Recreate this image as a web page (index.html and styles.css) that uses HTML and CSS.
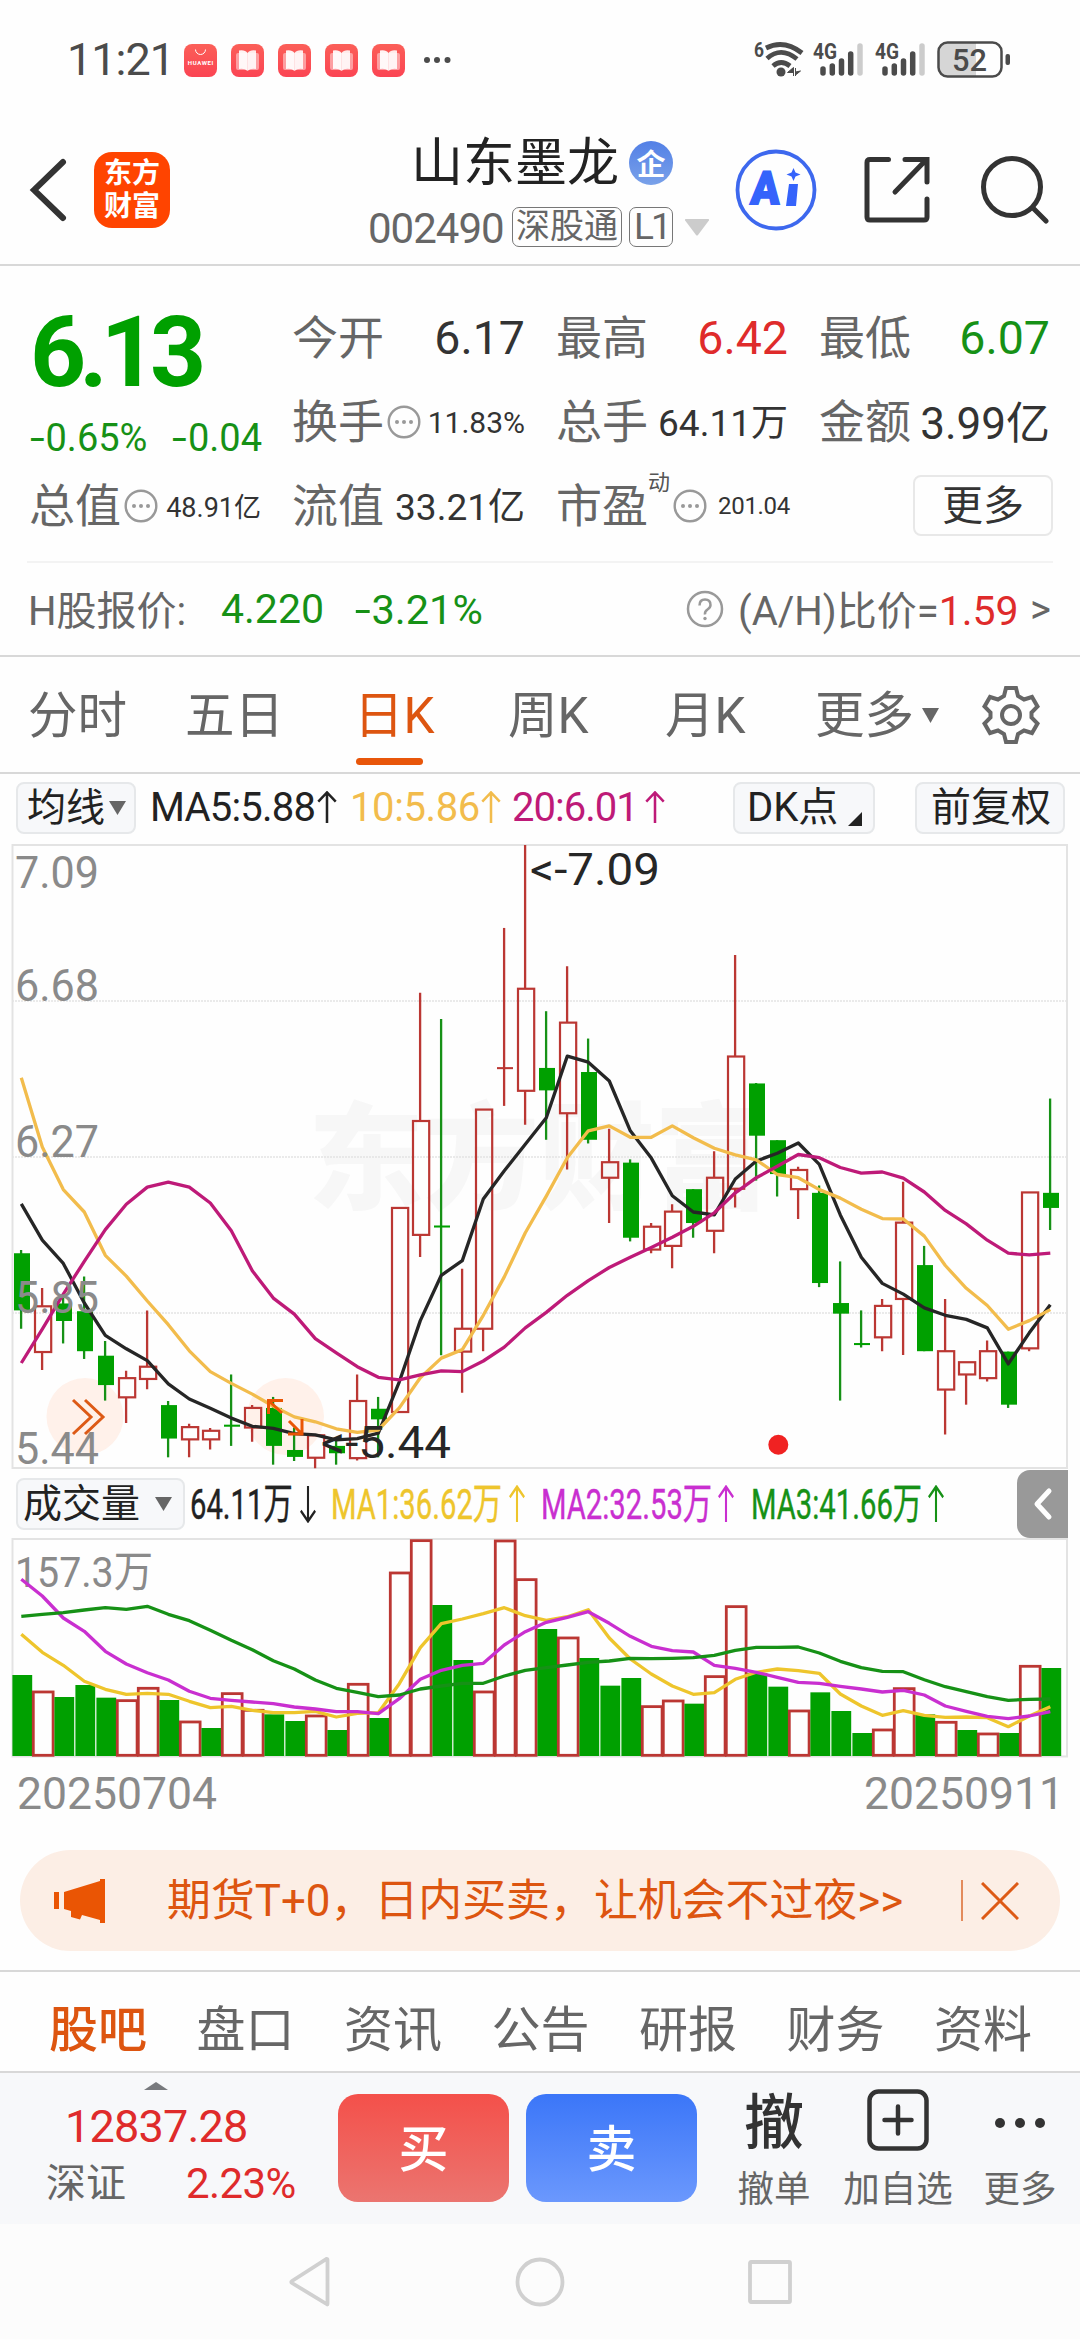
FILE: index.html
```html
<!DOCTYPE html>
<html lang="zh-CN">
<head>
<meta charset="utf-8">
<title>山东墨龙 002490</title>
<link rel="stylesheet" href="styles.css">
</head>
<body>
<svg class="defs" width="0" height="0">
  <defs>
    <linearGradient id="appRed" x1="0" y1="0" x2="0" y2="1"><stop offset="0" stop-color="#fb5f58"/><stop offset="1" stop-color="#fb4453"/></linearGradient>
    <symbol id="book" viewBox="0 0 33 33">
      <rect width="33" height="33" rx="8" fill="url(#appRed)"/>
      <rect x="5" y="9" width="23" height="17" rx="2" fill="#fff" opacity=".45"/>
      <path d="M8 6.500q6-1 8.500 2.500v18q-3-3-8.500-2z" fill="#fff" opacity=".93"/>
      <path d="M25 6.500q-6-1-8.500 2.500v18q3-3 8.500-2z" fill="#fff" opacity=".88"/>
    </symbol>
    <symbol id="more-dot" viewBox="0 0 34 34">
      <circle cx="17" cy="17" r="15.300" fill="none" stroke="#999" stroke-width="2.400"/>
      <circle cx="10" cy="17" r="2" fill="#999"/><circle cx="17" cy="17" r="2" fill="#999"/><circle cx="24" cy="17" r="2" fill="#999"/>
    </symbol>
    <symbol id="up" viewBox="0 0 20 34"><path d="M10 33V2M1 11l9-9.500 9 9.500" fill="none" stroke="currentColor" stroke-width="2.600"/></symbol>
    <symbol id="down" viewBox="0 0 20 34"><path d="M10 1v31M1 23l9 9.500 9-9.500" fill="none" stroke="currentColor" stroke-width="2.600"/></symbol>
    <symbol id="signal" viewBox="0 0 50 36">
      <g stroke="#4b4b4b" stroke-width="5.500" stroke-linecap="round"><path d="M9.500 28v4M18.800 25v7M28 20v12M37.200 13v19"/><path d="M46.500 5v27" stroke="#ccc"/></g>
    </symbol>
  </defs>
</svg>

<header class="status">
  <span class="clock">11:21</span>
  <svg class="app" width="33" height="33" viewBox="0 0 33 33"><rect width="33" height="33" rx="8" fill="url(#appRed)"/><path d="M11.500 5.500a5 5 0 0 0 10 0" fill="none" stroke="#fff" stroke-width="1"/><text x="3.800" y="21" font-size="6" font-weight="700" fill="#fff" textLength="25.500">HUAWEI</text></svg>
  <svg class="app" width="33" height="33"><use href="#book"/></svg>
  <svg class="app" width="33" height="33"><use href="#book"/></svg>
  <svg class="app" width="33" height="33"><use href="#book"/></svg>
  <svg class="app" width="33" height="33"><use href="#book"/></svg>
  <svg class="ellipsis" width="28" height="8"><g fill="#4b4b4b"><circle cx="4" cy="4" r="3"/><circle cx="14" cy="4" r="3"/><circle cx="24.500" cy="4" r="3"/></g></svg>
  <svg class="radio" width="262" height="44" viewBox="750 38 262 44">
    <text x="753" y="57" font-size="21" font-weight="700" fill="#4b4b4b" textLength="10" lengthAdjust="spacingAndGlyphs">6</text>
    <g fill="none" stroke="#4b4b4b" stroke-width="4.800" stroke-linecap="butt"><path d="M765 48Q783 39 801 53"/><path d="M766 58.500Q780 46 796 59"/><path d="M772 66Q780 59 789 66"/></g>
    <circle cx="780" cy="72" r="4.500" fill="#4b4b4b"/><path d="M792.500 68v8M794.500 68v8M786.500 72.500l6-5v5zM794.500 72l5-1-5 4z" fill="#4b4b4b" stroke="#4b4b4b" stroke-width="1"/>
    <text x="812" y="59" font-size="22" font-weight="700" fill="#4b4b4b" textLength="24" lengthAdjust="spacingAndGlyphs">4G</text>
    <use href="#signal" x="812.500" y="41" width="50" height="36"/>
    <text x="874" y="59" font-size="22" font-weight="700" fill="#4b4b4b" textLength="24" lengthAdjust="spacingAndGlyphs">4G</text>
    <use href="#signal" x="874.500" y="41" width="50" height="36"/>
    <path d="M946 43h29v33h-29q-8 0-8-8V51q0-8 8-8z" fill="#d6d6d6"/>
    <rect x="937.500" y="42.500" width="63" height="34" rx="9" fill="none" stroke="#4b4b4b" stroke-width="2.500"/>
    <rect x="1004.500" y="54" width="4.500" height="11" rx="2" fill="#4b4b4b"/>
    <text x="951" y="71" font-size="32" font-weight="500" fill="#4b4b4b" textLength="35" lengthAdjust="spacingAndGlyphs">52</text>
  </svg>
</header>

<nav class="header">
  <svg class="back" width="40" height="66" viewBox="0 0 40 66"><path d="M34 5L5 33l29 28" fill="none" stroke="#333" stroke-width="6" stroke-linecap="round" stroke-linejoin="miter"/></svg>
  <div class="logo"><span>东方</span><span>财富</span></div>
  <div class="stock">
    <div class="name"><span>山东墨龙</span><i class="badge">企</i></div>
    <div class="code"><span>002490</span><b>深股通</b><b>L1</b><svg width="24" height="17"><path d="M1 0h22q2 0 .5 2L13 16q-1 1-2 0L.5 2Q-1 0 1 0z" fill="#ccc"/></svg></div>
  </div>
  <svg class="ai" width="82" height="82" viewBox="0 0 82 82">
    <circle cx="41" cy="41" r="38.500" fill="none" stroke="#3d68ee" stroke-width="3.800"/>
    <text x="19" y="55.500" font-size="46" font-weight="900" fill="#3563fb" stroke="#3563fb" stroke-width="1.800" textLength="29" lengthAdjust="spacingAndGlyphs" transform="skewX(-4)">A</text>
    <path d="M54 35h9l-2 22h-10zM58.500 19l2 4.500 5 2-5 2-2 4.500-2-4.500-5-2 5-2z" fill="#3563fb"/>
  </svg>
  <svg class="share" width="70" height="70" viewBox="0 0 70 70"><path d="M25.500 4.500H7q-3 0-3 3V62q0 3 3 3h54q3 0 3-3V44M42 4.500h22V27M62 6L32 37" fill="none" stroke="#333" stroke-width="5" stroke-linecap="round"/></svg>
  <svg class="search" width="70" height="72" viewBox="0 0 70 72"><circle cx="33" cy="34" r="28.500" fill="none" stroke="#333" stroke-width="5"/><path d="M54 55l13 13" stroke="#333" stroke-width="5" stroke-linecap="round"/></svg>
</nav>

<section class="quote">
  <div class="price">
    <div class="last down">6.13</div>
    <div class="change down"><span><i class="dash">-</i>0.65%</span><span><i class="dash">-</i>0.04</span></div>
  </div>
  <div class="stats">
    <div class="cell"><span class="k">今开</span><span class="v v48">6.17</span></div>
    <div class="cell"><span class="k">最高</span><span class="v v48 up">6.42</span></div>
    <div class="cell"><span class="k">最低</span><span class="v v48 down">6.07</span></div>
    <div class="cell"><span class="k">换手</span><svg width="34" height="34"><use href="#more-dot"/></svg><span class="v v31">11.83%</span></div>
    <div class="cell"><span class="k">总手</span><span class="v v39">64.11万</span></div>
    <div class="cell"><span class="k">金额</span><span class="v v45">3.99亿</span></div>
  </div>
  <div class="stats wide">
    <div class="cell"><span class="k">总值</span><svg width="34" height="34"><use href="#more-dot"/></svg><span class="v v28">48.91亿</span></div>
    <div class="cell"><span class="k">流值</span><span class="v v39">33.21亿</span></div>
    <div class="cell"><span class="k">市盈</span><sup>动</sup><svg width="34" height="34"><use href="#more-dot"/></svg><span class="v v26">201.04</span></div>
    <button class="more">更多</button>
  </div>
</section>
<section class="hshare">
  <span class="hk">H股报价:</span><span class="hp down">4.220</span><span class="hc down"><i class="dash">-</i>3.21%</span>
  <svg class="ask" width="38" height="38"><circle cx="19" cy="19" r="17" fill="none" stroke="#999" stroke-width="2.500"/><path d="M13.500 15.500q0-6 5.500-6t5.500 5.500q0 2.500-3 4.500t-2.500 5" fill="none" stroke="#999" stroke-width="2.500"/><circle cx="19" cy="28.500" r="1.700" fill="#999"/></svg>
  <span class="ah">(A/H)比价=<em>1.59</em></span><span class="gt">&gt;</span>
</section>

<nav class="periods">
  <span>分时</span><span>五日</span><span class="on">日K</span><span>周K</span><span>月K</span><span>更多</span>
  <svg class="tri" width="17" height="15"><path d="M0 0h17L8.500 15z" fill="#666"/></svg>
  <svg class="gear" width="58" height="60" viewBox="0 0 58 60"><path d="M24 3h10l2 8 6 3.500 8-2.500 5.500 9.500-6 6v5l6 6-5.500 9.500-8-2.500-6 3.500-2 8H24l-2-8-6-3.500-8 2.500L2.500 38.500l6-6v-5l-6-6L8 12l8 2.500 6-3.500z" fill="none" stroke="#666" stroke-width="4"/><circle cx="29" cy="30" r="9" fill="none" stroke="#666" stroke-width="4"/></svg>
</nav>

<div class="ma">
  <span class="btn avg">均线<svg width="17" height="14"><path d="M0 0h17L8.500 14z" fill="#666"/></svg></span>
  <span class="ma5">MA5:5.88<svg width="20" height="33"><use href="#up"/></svg></span>
  <span class="ma10">10:5.86<svg width="20" height="33"><use href="#up"/></svg></span>
  <span class="ma20">20:6.01<svg width="20" height="33"><use href="#up"/></svg></span>
  <span class="btn dk">DK点<svg width="14" height="14"><path d="M14 0v14H0z" fill="#222"/></svg></span>
  <span class="btn adj">前复权</span>
</div>

<svg id="price" class="chart" width="1080" height="630" viewBox="0 0 1080 630"></svg>

<div class="vol">
  <span class="btn volbtn">成交量<svg width="17" height="14"><path d="M0 0h17L8.500 14z" fill="#666"/></svg></span>
  <span class="fig f0"><u>64.11万</u><svg width="16" height="38" viewBox="0 0 20 34" preserveAspectRatio="none"><use href="#down"/></svg></span>
  <span class="fig f1"><u>MA1:36.62万</u><svg width="16" height="38" viewBox="0 0 20 34" preserveAspectRatio="none"><use href="#up"/></svg></span>
  <span class="fig f2"><u>MA2:32.53万</u><svg width="16" height="38" viewBox="0 0 20 34" preserveAspectRatio="none"><use href="#up"/></svg></span>
  <span class="fig f3"><u>MA3:41.66万</u><svg width="16" height="38" viewBox="0 0 20 34" preserveAspectRatio="none"><use href="#up"/></svg></span>
  <span class="fold"><svg width="20" height="34"><path d="M16 4L4 17l12 13" fill="none" stroke="#fff" stroke-width="5" stroke-linecap="round" stroke-linejoin="round"/></svg></span>
</div>

<svg id="volume" class="chart" width="1080" height="225" viewBox="0 0 1080 225"></svg>
<div class="dates"><span>20250704</span><span>20250911</span></div>

<div class="banner">
  <svg width="54" height="46" viewBox="0 0 54 46"><path d="M1 14h5v17H1zM11 14l36-11V1h5v44h-5v-3L29 37l-2 4.500L18 39v-6l-7-2z" fill="#ea5504"/></svg>
  <span>期货T+0，日内买卖，让机会不过夜&gt;&gt;</span>
  <i></i>
  <svg class="x" width="38" height="38"><path d="M1 1l36 36M37 1L1 37" stroke="#dd5a16" stroke-width="3"/></svg>
</div>

<nav class="tabs"><span class="on">股吧</span><span>盘口</span><span>资讯</span><span>公告</span><span>研报</span><span>财务</span><span>资料</span></nav>

<footer class="trade">
  <div class="index">
    <svg width="24" height="8"><path d="M0 8L12 0l12 8z" fill="#77797d"/></svg>
    <div class="pts">12837.28</div>
    <div class="row"><span>深证</span><b>2.23%</b></div>
  </div>
  <button class="buy">买</button>
  <button class="sell">卖</button>
  <div class="act cancel"><strong>撤</strong><span>撤单</span></div>
  <div class="act add"><svg width="62" height="62"><rect x="2.500" y="2.500" width="57" height="57" rx="9" fill="none" stroke="#333" stroke-width="4.500"/><path d="M31 17.500v27M17.500 31h27" stroke="#333" stroke-width="4.500" stroke-linecap="round"/></svg><span>加自选</span></div>
  <div class="act rest"><svg width="52" height="62"><g fill="#333"><circle cx="6" cy="34" r="5"/><circle cx="26" cy="34" r="5"/><circle cx="46" cy="34" r="5"/></g></svg><span>更多</span></div>
</footer>

<div class="sysnav">
  <svg width="44" height="52"><path d="M39.500 4v44q0 1-1 0L4 27q-1.500-1 0-2L38.500 3q1 0 1 1z" fill="none" stroke="#d0d0d0" stroke-width="3.800"/></svg>
  <svg width="50" height="52"><circle cx="25" cy="26" r="22.500" fill="none" stroke="#d0d0d0" stroke-width="3.800"/></svg>
  <svg width="44" height="52"><rect x="2" y="6" width="40" height="40" rx="1" fill="none" stroke="#d0d0d0" stroke-width="3.800"/></svg>
</div>
<script src="charts.js"></script>
</body>
</html>
```
FILE: styles.css
```css
* { box-sizing: border-box; }
body {
  margin: 0; width: 1080px; height: 2340px; overflow: hidden; background: #fefefe; color: #666;
  font-family: Roboto, "Noto Sans CJK SC", sans-serif; white-space: nowrap;
}
svg { display: block; flex: none; }
svg text { font-family: Roboto, "Noto Sans CJK SC", sans-serif; }
.defs { position: absolute; }
button { border: 0; padding: 0; font-family: inherit; background: none; }
span { flex: none; }
.up { color: #df2b2b; }
.down { color: #169116; }
.dash { display: inline-block; font-style: normal; transform: scaleX(1.4); margin: 0 3px 0 2px; }

.status { height: 120px; display: flex; align-items: center; padding-left: 67px; }
.clock { width: 117px; font-size: 45px; letter-spacing: -1px; color: #4b4b4b; line-height: 120px; }
.status .app { margin-right: 14px; }
.ellipsis { margin-left: 4px; }
.radio { margin: 0 0 0 300px; }

.header { height: 146px; display: flex; border-bottom: 2px solid #d8d8d8; padding-left: 29px; }
.back { margin-top: 37px; }
.logo {
  width: 76px; height: 76px; margin: 32px 0 0 25px; border-radius: 18px; background: #ff4400; color: #fff;
  font-size: 28px; font-weight: 700; line-height: 33px; display: flex; flex-direction: column; align-items: center; justify-content: center;
}
.stock { width: 340px; margin-left: 199px; }
.name { display: flex; height: 80px; padding-left: 42px; font-size: 52px; line-height: 88px; color: #222; }
.badge { width: 44px; height: 44px; margin: 21px 0 0 10px; border-radius: 50%; background: linear-gradient(#5380e6, #79a1e9); color: #fff; font: 700 29px/42px "Noto Sans CJK SC", sans-serif; text-align: center; }
.code { display: flex; align-items: center; height: 56px; margin-top: -1px; font-size: 42px; color: #666; }
.code span { width: 144px; margin: 2px 0 0 -1px; letter-spacing: -1px; }
.code b { height: 40px; margin-right: 7px; padding: 0 3px; border: 1.500px solid #777; border-radius: 7px; font-weight: 400; font-size: 34px; line-height: 37px; }
.code b + b { font-size: 37px; line-height: 38px; width: 44px; padding: 0 4px; letter-spacing: -3px; }
.code svg { margin-left: 5px; }
.ai { margin: 29px 0 0 26px; }
.share { margin: 35px 0 0 46px; }
.search { margin: 33px 0 0 46px; }

.quote { height: 297px; margin: 0 27px; border-bottom: 2px solid #f3f3f3; display: grid; grid-template-columns: 265px 1fr; grid-template-rows: 199px 84px; align-content: start; }
.price { padding-left: 3px; }
.last { height: 108px; margin-top: 33px; font-size: 98px; line-height: 108px; font-weight: 700; letter-spacing: -7px; color: #00a000; }
.change { display: flex; gap: 25px; font-size: 38px; line-height: 44px; margin-top: 9px; }
.stats { display: grid; grid-template-columns: 233px 232px 231px; column-gap: 31px; grid-template-rows: 84px 84px; padding-top: 30px; }
.stats.wide { grid-column: 1 / 3; grid-template-columns: 232px 233px 234px 1fr; grid-template-rows: 84px; padding: 0 0 0 2px; margin-top: -1px; }
.cell { display: flex; align-items: center; height: 84px; white-space: nowrap; }
.k { font-size: 46px; line-height: 84px; }
.v { margin-left: auto; color: #333; }
.v.up { color: #df2b2b; }
.v.down { color: #169116; }
.v48 { font-size: 46.500px; } .v45 { font-size: 44px; margin-top: -5px; } .v39 { font-size: 37px; margin-top: -4px; } .v31 { font-size: 30px; } .v28 { font-size: 27px; margin-top: -2px; } .v26 { font-size: 24px; letter-spacing: -.3px; }
.cell svg { margin: 0 0 0 3px; }
.cell sup { font-size: 22px; line-height: 24px; align-self: flex-start; margin: 7px 0 0; color: #555; }
.more { width: 140px; height: 61px; margin: 11px 0 0; justify-self: end; border: 2px solid #e8e8e8; border-radius: 8px; font-size: 41px; line-height: 54px; color: #333; }

.hshare { height: 94px; display: flex; align-items: center; padding: 0 28px; border-bottom: 2px solid #d8d8d8; font-size: 40px; }
.hk { width: 193px; margin-top: -3px; }
.hp { width: 134px; font-size: 41px; }
.hc { width: 331px; font-size: 41.500px; }
.ask { margin-right: 14px; }
.ah { width: 292px; margin-top: -3px; }
.ah em { font-style: normal; color: #df2b2b; font-size: 41px; }

.periods { height: 117px; display: flex; padding-left: 28px; border-bottom: 2px solid #d8d8d8; font-size: 49.500px; line-height: 119px; }
.periods span { width: 157px; }
.periods .on { position: relative; color: #dd5510; width: 154px; margin-left: 12px; }
.periods .on::after { content: ""; position: absolute; left: 2px; bottom: 7px; width: 67px; height: 7px; border-radius: 4px; background: #e8560a; }
.periods span:nth-child(6) { width: 107px; margin-left: -4px; }
.periods span:nth-child(5) { width: 154px; }
.tri { margin-top: 51px; }
.gear { margin: 28px 0 0 43px; }

.ma { height: 67px; display: flex; align-items: center; padding-left: 16px; font-size: 40px; line-height: 60px; color: #222; }
.ma > span { display: flex; align-items: center; }
.btn { height: 52px; border: 2px solid #e6e8ea; border-radius: 8px; background: #f7f8fa; color: #222; line-height: 46px; }
.ma .btn { position: relative; }
.avg { width: 120px; padding-left: 9px; gap: 4px; font-size: 39px; }
.ma5 { width: 200px; margin-left: 14px; letter-spacing: -.8px; }
.ma10 { width: 162px; color: #f2bc4c; letter-spacing: -.4px; }
.ma20 { width: 221px; color: #be1a78; letter-spacing: -1px; }
.ma svg { margin-left: auto; }
.ma5 svg { margin-right: 13px; }
.ma10 svg { margin-right: 11px; }
.ma20 svg { margin-right: 68px; }
.ma .btn svg { margin: 0; }
.dk { width: 142px; padding-left: 12px; }
.ma .dk svg { margin: 22px 0 0 10px; }
.adj { width: 150px; margin-left: 40px; padding-left: 14px; }

.vol { position: relative; height: 65px; display: flex; align-items: center; padding-left: 16px; }
.volbtn { width: 169px; display: flex; align-items: center; padding-left: 5px; gap: 15px; font-size: 39px; }
.fig { display: flex; align-items: center; height: 60px; }
.fig u { display: block; flex: none; width: 173px; margin-top: -8px; text-decoration: none; font-size: 43px; transform-origin: 0 50%; transform: scaleX(.68); -webkit-text-stroke: .4px currentColor; }
.fig svg { margin-left: auto; }
.f0 { width: 126px; margin-left: 5px; color: #222; }
.f0 u { width: 105px; }
.f1 { width: 194px; margin-left: 15px; color: #eec52c; }
.f2 { width: 193px; margin-left: 16px; color: #c92fd0; }
.f3 { width: 193px; margin-left: 17px; color: #169116; }
.fold { position: absolute; right: 12px; top: -1px; width: 51px; height: 68px; border-radius: 13px 0 0 13px; background: #999; display: flex; align-items: center; justify-content: center; z-index: 1; }

.dates { height: 89px; display: flex; justify-content: space-between; padding: 0 16px 0 17px; font-size: 44.500px; line-height: 67px; color: #8a8a8a; }

.banner { height: 101px; margin: 0 20px; border-radius: 51px; background: #fceee5; display: flex; align-items: center; padding-left: 33px; color: #dd5510; }
.banner span { width: 794px; margin-left: 60px; font-size: 43.900px; line-height: 96px; }
.banner i { width: 2px; height: 41px; background: #e38b5c; }
.x { margin-left: 18px; }

.tabs { height: 103px; margin-top: 19px; border-top: 2px solid #d8d8d8; border-bottom: 2px solid #d8d8d8; display: flex; padding-left: 49px; font-size: 49px; line-height: 118px; }
.tabs span { width: 147.500px; }
.tabs .on { color: #dd5510; font-weight: 500; }

.trade { height: 151px; background: #f7f8fa; display: flex; }
.index { width: 338px; padding: 9px 0 0 46px; }
.index svg { margin-left: 98px; }
.pts { margin: 10px 0 0 19px; font-size: 45px; line-height: 54px; color: #df2b2b; letter-spacing: -.8px; }
.index .row { display: flex; font-size: 40px; line-height: 56px; margin-top: 2px; }
.index .row b { margin-left: 60px; font-weight: 400; font-size: 42px; color: #df2b2b; letter-spacing: -.6px; }
.buy, .sell { width: 171px; height: 108px; margin-top: 21px; border-radius: 20px; color: #fff; font-size: 50px; font-weight: 500; line-height: 104px; flex: none; padding-top: 3px; }
.buy { background: linear-gradient(#f4504a, #eb7570); }
.sell { margin-left: 17px; background: linear-gradient(#3b76f8, #6b98fd); }
.act { display: flex; flex-direction: column; align-items: center; font-size: 36.500px; line-height: 50px; padding-top: 16px; }
.act strong { height: 62px; font-size: 60px; font-weight: 500; line-height: 69px; color: #333; }
.act span { margin-top: 14px; }
.cancel { width: 74px; margin-left: 40px; }
.add { width: 110px; margin-left: 32px; }
.rest { width: 74px; margin-left: 30px; }

.sysnav { height: 115px; background: #fcfcfc; display: flex; justify-content: space-between; align-items: center; padding: 0 288px; }
```
FILE: charts.js
```js
const NS = 'http://www.w3.org/2000/svg';
const STEP = 21, X0 = 20.7;
const RED = '#bb3733', GREEN = '#00a000';

function add(svg, tag, attrs, text) {
  const el = document.createElementNS(NS, tag);
  for (const k in attrs) el.setAttribute(k, attrs[k]);
  if (text) el.textContent = text;
  svg.appendChild(el);
}
function line(svg, values, scale, offset, color) {
  const points = values.map((v, i) => (X0 + i * STEP + 0.6).toFixed(1) + ',' + (v / scale - offset).toFixed(1)).join(' ');
  add(svg, 'polyline', { points, fill: 'none', stroke: color, 'stroke-width': 3.3, 'stroke-linejoin': 'round' });
}

// direction, high, body top, body bottom, low
const candles = [
  ['g',1002,1010,1150,1195],['r',1095,1140,1252,1296],['g',1110,1133,1176,1231],['g',1067,1152,1250,1269],['g',1225,1261,1333,1371],
  ['r',1298,1316,1363,1426],['r',1150,1288,1318,1343],['g',1372,1382,1464,1510],['r',1428,1436,1466,1510],['r',1438,1445,1466,1491],
  ['g',1307,1430,1435,1482],['r',1382,1389,1437,1472],['g',1362,1389,1482,1528],['g',1437,1492,1509,1519],['r',1455,1456,1511,1537],
  ['g',1460,1482,1500,1528],['r',1307,1372,1512,1518],['g',1362,1391,1417,1510],['r',899,899,1399,1399],['r',372,686,965,1019],
  ['g',436,942,947,1260],['r',1048,1195,1251,1352],['r',658,658,1195,1250],['d',213,554,559,649],['r',10,362,612,695],
  ['g',417,556,611,732],['r',307,445,667,805],['g',484,566,732,741],['r',705,787,825,936],['g',780,788,972,981],
  ['r',936,945,1001,1010],['r',890,908,992,1047],['g',853,853,936,972],['r',760,825,955,1010],['r',279,528,852,898],
  ['g',593,594,722,832],['g',733,733,816,871],['r',798,806,853,926],['g',844,862,1083,1093],['g',1030,1132,1158,1371],
  ['g',1150,1230,1235,1241],['r',1122,1139,1216,1250],['r',835,935,1122,1259],['g',992,1039,1250,1250],['r',1122,1250,1344,1454],
  ['r',1277,1277,1307,1381],['r',1224,1250,1316,1324],['g',1251,1251,1381,1389],['r',861,861,1243,1250],['g',631,862,899,953]];
const ma5 = [889,978,1035,1132,1211,1244,1273,1330,1367,1390,1414,1434,1439,1452,1455,1467,1464,1451,1325,1175,1064,1028,877,808,743,678,527,542,588,710,777,869,909,916,828,784,765,740,792,916,1020,1084,1110,1144,1162,1172,1193,1281,1205,1136];
const ma10 = [580,750,854,909,1015,1066,1127,1185,1249,1300,1329,1355,1385,1411,1423,1440,1449,1443,1389,1315,1267,1246,1162,1068,960,870,776,710,698,726,726,698,727,753,769,781,817,825,854,875,902,925,926,968,1040,1096,1138,1196,1175,1148];
const ma20 = [1279,1196,1110,1030,952,890,848,836,848,887,955,1053,1120,1159,1219,1254,1288,1314,1320,1308,1298,1300,1274,1240,1193,1155,1113,1077,1045,1020,996,971,944,911,862,825,797,768,776,800,814,811,826,860,905,938,978,1010,1014,1010];

const price = document.getElementById('price');
const PY = 2.45;
add(price, 'rect', { x: 12.5, y: 4, width: 1054.5, height: 623, fill: 'none', stroke: '#e3e3e3', 'stroke-width': 2 });
add(price, 'text', { x: 308, y: 359, 'font-size': 116, 'font-weight': 900, fill: '#f7f7f7', textLength: 462 }, '东方财富');
[160, 316, 472].forEach(y => add(price, 'path', { d: `M12 ${y}H1067`, stroke: '#e4e4e4', 'stroke-width': 1.5, 'stroke-dasharray': '2 1' }));
[85, 285.5].forEach(cx => add(price, 'circle', { cx, cy: 575.5, r: 38.5, fill: '#fff1ea' }));
candles.forEach(([dir, hi, top, bot, lo], i) => {
  const x = X0 + i * STEP, T = top / PY, B = bot / PY;
  if (dir === 'r') {
    add(price, 'path', { d: `M${x + .4} ${hi / PY}V${T}M${x + .4} ${B}V${lo / PY}`, stroke: RED, 'stroke-width': 2.3 });
    add(price, 'rect', { x: x - 6.7, y: T, width: 16.2, height: B - T, fill: 'none', stroke: RED, 'stroke-width': 2.2 });
  } else {
    const c = dir === 'g' ? GREEN : RED;
    add(price, 'path', { d: `M${x + .4} ${hi / PY}V${lo / PY}`, stroke: dir === 'g' ? '#169116' : c, 'stroke-width': 2.3 });
    add(price, 'rect', { x: x - 6.7, y: T, width: 16, height: B - T, fill: c });
  }
});
line(price, ma5, PY, 0, '#262626');
line(price, ma10, PY, 0, '#f2bc4c');
line(price, ma20, PY, 0, '#be1a78');
[['7.09', 47], ['6.68', 160], ['6.27', 316], ['5.85', 472], ['5.44', 623]].forEach(([t, y]) =>
  add(price, 'text', { x: 15, y, 'font-size': 44, fill: '#8a8a8a', textLength: 84, lengthAdjust: 'spacingAndGlyphs' }, t));
add(price, 'text', { x: 530, y: 44, 'font-size': 44, fill: '#262626', textLength: 130, lengthAdjust: 'spacingAndGlyphs' }, '<-7.09');
add(price, 'text', { x: 321, y: 617, 'font-size': 44, fill: '#262626', textLength: 130, lengthAdjust: 'spacingAndGlyphs' }, '<-5.44');
add(price, 'path', { d: 'M73 559l18 17-18 17M85 559l18 17-18 17', fill: 'none', stroke: '#dd5a16', 'stroke-width': 3 });
add(price, 'path', { d: 'M283 559.500H268.500V573M269 560l13 12M302 578v15h-14M302 593l-13-13', fill: 'none', stroke: '#ea5504', 'stroke-width': 3 });
add(price, 'circle', { cx: 778.3, cy: 603.7, r: 10, fill: '#f02222' });

const bars = [
  ['g',642],['r',689],['g',708],['g',672],['g',710],['r',715],['r',678],['g',717],['r',779],['g',801],['r',694],['r',744],['g',760],['g',780],['r',761],['g',807],['r',666],
  ['g',771],['r',332],['r',235],['g',432],['g',597],['r',689],['r',236],['r',352],['g',504],['r',527],['g',591],['g',674],['g',651],['r',733],['r',716],['g',728],['r',643],
  ['r',433],['g',636],['g',677],['r',746],['g',694],['g',750],['g',816],['r',803],['r',679],['g',760],['r',780],['g',807],['r',815],['g',816],['r',612],['g',621]];
const v1 = [520,574,613,661,685,700,697,700,721,740,736,748,755,755,751,768,757,755,668,560,488,474,458,440,464,478,467,446,531,594,639,675,700,695,655,634,624,629,637,699,735,763,749,763,769,768,770,797,765,737];
const v2 = [355,405,471,511,571,609,635,657,691,712,718,723,728,738,744,752,752,758,713,655,628,613,607,552,512,484,469,452,487,526,556,569,573,613,622,634,649,664,667,676,684,693,688,702,735,751,766,773,765,752];
const v3 = [466,460,455,447,440,445,436,460,479,508,538,566,599,624,657,682,694,707,702,684,675,667,667,645,628,620,612,604,600,592,593,592,590,583,568,559,559,558,576,601,620,631,632,656,677,692,707,718,715,714];

const volume = document.getElementById('volume');
const TOP = 75, BASE = 220;
add(volume, 'rect', { x: 12.5, y: 3, width: 1054.5, height: 217.5, fill: 'none', stroke: '#e3e3e3', 'stroke-width': 2 });
add(volume, 'text', { x: 15, y: 50.5, 'font-size': 43, fill: '#8a8a8a', textLength: 138, lengthAdjust: 'spacingAndGlyphs' }, '157.3万');
bars.forEach(([dir, top], i) => {
  const y = top / 3 - TOP;
  if (dir === 'g') add(volume, 'rect', { x: 12.4 + i * STEP, y, width: 19.8, height: BASE - y, fill: GREEN });
  else add(volume, 'rect', { x: 12.3 + i * STEP, y: y + 1.3, width: 19.8, height: BASE - y - 2, fill: 'none', stroke: RED, 'stroke-width': 2.8 });
});
line(volume, v1, 3, TOP, '#eec52c');
line(volume, v2, 3, TOP, '#c92fd0');
line(volume, v3, 3, TOP, '#169116');
```
